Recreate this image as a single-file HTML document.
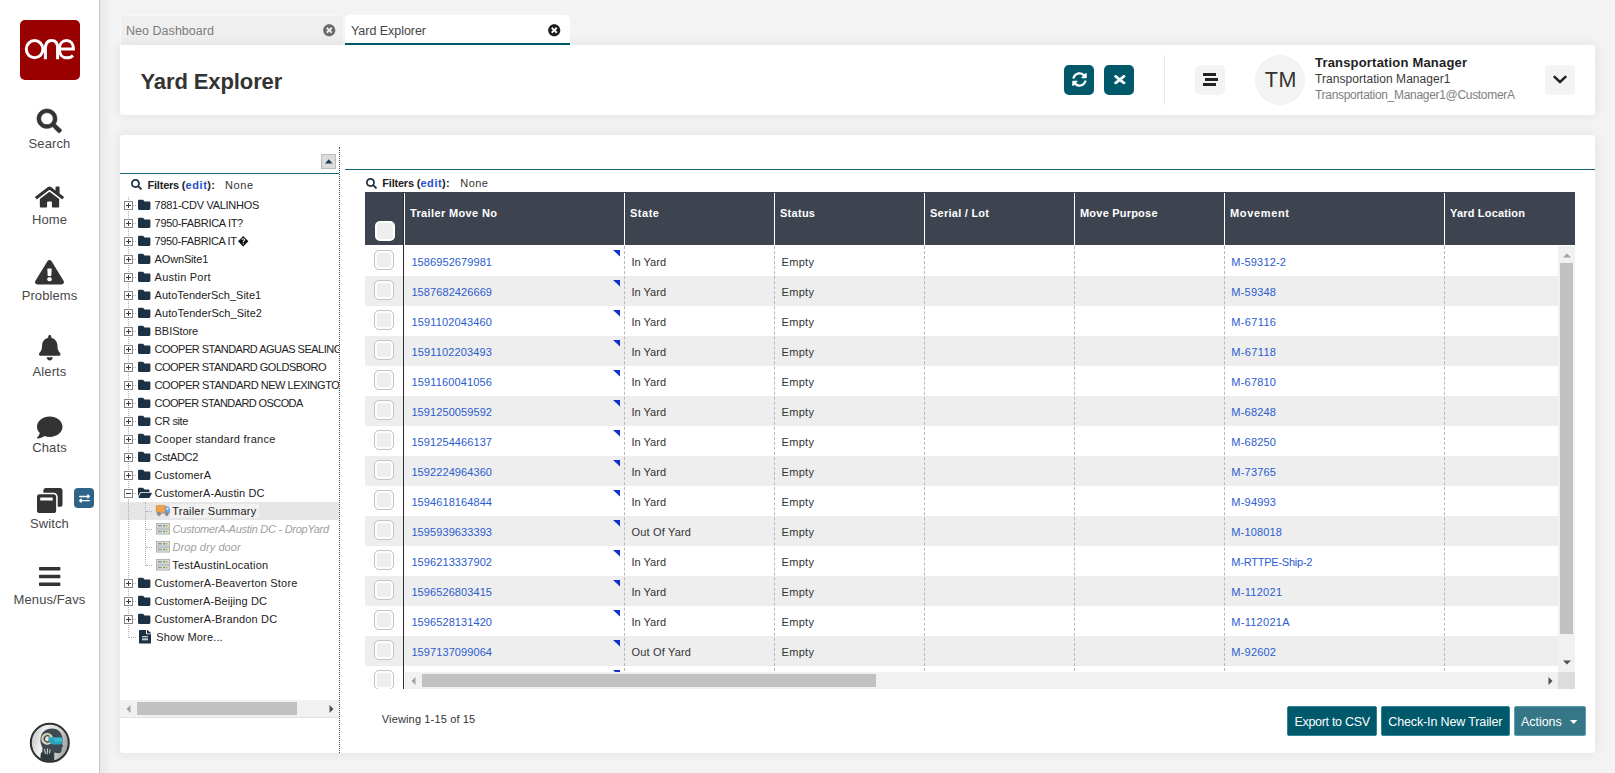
<!DOCTYPE html>
<html><head><meta charset="utf-8"><title>Yard Explorer</title>
<style>
html,body{margin:0;padding:0}
body{width:1615px;height:773px;overflow:hidden;position:relative;background:#f4f3f3;font-family:"Liberation Sans", sans-serif;}
svg{display:block;overflow:visible}
</style></head><body>
<div style="position:absolute;left:100px;top:0px;width:12px;height:773px;background:linear-gradient(to right,#eae8e8,#f4f3f3);"></div>
<div style="position:absolute;left:0px;top:0px;width:99px;height:773px;background:#fff;"></div>
<div style="position:absolute;left:99px;top:0px;width:1px;height:773px;background:#c6c6c6;"></div>
<div style="position:absolute;left:20px;top:20px;width:60px;height:60px;background:#990000;border-radius:5px;"></div>
<svg style="position:absolute;left:20px;top:20px" width="60" height="60" viewBox="20 20 60 60" fill="none" stroke="#fff" stroke-width="3" stroke-linecap="butt">
<ellipse cx="34.6" cy="49.2" rx="8.3" ry="8.6"/>
<path d="M45.4 59.3 V49 C45.4 42.5 48.5 40.6 51.6 40.6 C55 40.6 57.6 42.6 57.6 48 V59.3"/>
<path d="M59.6 49 H73.4 C73.4 43.5 70.5 40.6 66.6 40.6 C62.2 40.6 59.3 44 59.3 49.2 C59.3 54.6 62.4 57.8 66.8 57.8 C69.6 57.8 71.6 56.9 73 55.4"/>
</svg>
<svg style="position:absolute;left:37px;top:108.9px;" width="24.6" height="23.8" viewBox="0 0 512 512" preserveAspectRatio="none"><path stroke="#333" stroke-width="14" fill="#333" d="M505 442.7L405.3 343c-4.5-4.5-10.6-7-17-7H372c27.6-35.3 44-79.7 44-128C416 93.1 322.9 0 208 0S0 93.1 0 208s93.1 208 208 208c48.3 0 92.7-16.4 128-44v16.3c0 6.4 2.5 12.5 7 17l99.7 99.7c9.4 9.4 24.6 9.4 33.9 0l28.3-28.3c9.4-9.4 9.4-24.6.1-34zM208 336c-70.7 0-128-57.2-128-128 0-70.7 57.2-128 128-128 70.7 0 128 57.2 128 128 0 70.7-57.2 128-128 128z"/></svg>
<div style="position:absolute;left:0;top:134px;width:99px;text-align:center;font-size:13px;line-height:20px;color:#484848;letter-spacing:0.1px">Search</div>
<svg style="position:absolute;left:35.3px;top:184.6px;" width="29" height="24" viewBox="0 0 576 512" preserveAspectRatio="none"><path fill="#333" d="M280.37 148.26L96 300.11V464a16 16 0 0 0 16 16l112.06-.29a16 16 0 0 0 15.92-16V368a16 16 0 0 1 16-16h64a16 16 0 0 1 16 16v95.64a16 16 0 0 0 16 16.05L464 480a16 16 0 0 0 16-16V300L295.67 148.26a12.19 12.19 0 0 0-15.3 0zM571.6 251.47L488 182.56V44.05a12 12 0 0 0-12-12h-56a12 12 0 0 0-12 12v72.61L318.47 43a48 48 0 0 0-61 0L4.34 251.47a12 12 0 0 0-1.6 16.9l25.5 31A12 12 0 0 0 45.15 301l235.22-193.74a12.19 12.19 0 0 1 15.3 0L530.9 301a12 12 0 0 0 16.9-1.6l25.5-31a12 12 0 0 0-1.7-16.93z"/></svg>
<div style="position:absolute;left:0;top:210px;width:99px;text-align:center;font-size:13px;line-height:20px;color:#484848;letter-spacing:0.1px">Home</div>
<svg style="position:absolute;left:35.3px;top:260px;" width="29" height="24.5" viewBox="0 0 576 512" preserveAspectRatio="none"><path fill="#333" d="M569.517 440.013C587.975 472.007 564.806 512 527.94 512H48.054c-36.937 0-59.999-40.055-41.577-71.987L246.423 23.985c18.467-32.009 64.72-31.951 83.154 0l239.94 416.028zM288 354c-25.405 0-46 20.595-46 46s20.595 46 46 46 46-20.595 46-46-20.595-46-46-46zm-43.673-165.346l7.418 136c.347 6.364 5.609 11.346 11.982 11.346h48.546c6.373 0 11.635-4.982 11.982-11.346l7.418-136c.375-6.874-5.098-12.654-11.982-12.654h-63.383c-6.884 0-12.356 5.78-11.981 12.654z"/></svg>
<div style="position:absolute;left:0;top:286px;width:99px;text-align:center;font-size:13px;line-height:20px;color:#484848;letter-spacing:0.1px">Problems</div>
<svg style="position:absolute;left:39px;top:335.2px;" width="21.5" height="25.5" viewBox="0 0 448 512" preserveAspectRatio="none"><path fill="#333" d="M224 512c35.32 0 63.97-28.65 63.97-64H160.03c0 35.35 28.65 64 63.97 64zm215.39-149.71c-19.32-20.76-55.47-51.99-55.47-154.29 0-77.7-54.48-139.9-127.94-155.16V32c0-17.67-14.32-32-31.98-32s-31.98 14.33-31.98 32v20.84C118.56 68.1 64.08 130.3 64.08 208c0 102.3-36.15 133.53-55.47 154.29-6 6.45-8.66 14.16-8.61 21.71.11 16.4 12.98 32 32.1 32h383.8c19.12 0 32-15.6 32.1-32 .05-7.55-2.61-15.27-8.61-21.71z"/></svg>
<div style="position:absolute;left:0;top:362px;width:99px;text-align:center;font-size:13px;line-height:20px;color:#484848;letter-spacing:0.1px">Alerts</div>
<svg style="position:absolute;left:37px;top:415px;" width="25.5" height="25" viewBox="0 0 512 512" preserveAspectRatio="none"><path fill="#333" d="M256 32C114.6 32 0 125.1 0 240c0 49.6 21.4 95 57 130.7C44.5 421.1 2.7 466 2.2 466.5c-2.2 2.3-2.8 5.7-1.5 8.7S4.8 480 8 480c66.3 0 116-31.8 140.6-51.4 32.7 12.3 69 19.4 107.4 19.4 141.4 0 256-93.1 256-208S397.4 32 256 32z"/></svg>
<div style="position:absolute;left:0;top:438px;width:99px;text-align:center;font-size:13px;line-height:20px;color:#484848;letter-spacing:0.1px">Chats</div>
<svg style="position:absolute;left:37px;top:487.5px;" width="25.5" height="25" viewBox="0 0 512 512" preserveAspectRatio="none"><path fill="#333" d="M512 48v288c0 26.5-21.5 48-48 48h-48V176c0-44.1-35.9-80-80-80H128V48c0-26.5 21.5-48 48-48h288c26.5 0 48 21.5 48 48zM384 176v288c0 26.5-21.5 48-48 48H48c-26.5 0-48-21.5-48-48V176c0-26.5 21.5-48 48-48h288c26.5 0 48 21.5 48 48zm-68 28c0-6.6-5.4-12-12-12H76c-6.6 0-12 5.4-12 12v52h252v-52z"/></svg>
<div style="position:absolute;left:0;top:514px;width:99px;text-align:center;font-size:13px;line-height:20px;color:#484848;letter-spacing:0.1px">Switch</div>
<svg style="position:absolute;left:38.8px;top:564px;" width="21.4" height="25" viewBox="0 0 448 512" preserveAspectRatio="none"><path fill="#333" d="M16 132h416c8.837 0 16-7.163 16-16V76c0-8.837-7.163-16-16-16H16C7.163 60 0 67.163 0 76v40c0 8.837 7.163 16 16 16zm0 160h416c8.837 0 16-7.163 16-16v-40c0-8.837-7.163-16-16-16H16c-8.837 0-16 7.163-16 16v40c0 8.837 7.163 16 16 16zm0 160h416c8.837 0 16-7.163 16-16v-40c0-8.837-7.163-16-16-16H16c-8.837 0-16 7.163-16 16v40c0 8.837 7.163 16 16 16z"/></svg>
<div style="position:absolute;left:0;top:590px;width:99px;text-align:center;font-size:13px;line-height:20px;color:#484848;letter-spacing:0.1px">Menus/Favs</div>
<div style="position:absolute;left:74px;top:488px;width:20px;height:20px;background:#2f6388;border-radius:4px;"></div>
<svg style="position:absolute;left:78.5px;top:492.5px;" width="11" height="11" viewBox="0 0 512 512" preserveAspectRatio="none"><path fill="#fff" d="M0 168v-16c0-13.255 10.745-24 24-24h360V80c0-21.367 25.899-32.042 40.971-16.971l80 80c9.372 9.373 9.372 24.569 0 33.941l-80 80C409.956 271.982 384 261.456 384 240v-48H24c-13.255 0-24-10.745-24-24zm488 152H128v-48c0-21.314-25.862-32.08-40.971-16.971l-80 80c-9.372 9.373-9.372 24.569 0 33.941l80 80C102.057 463.997 128 453.437 128 432v-48h360c13.255 0 24-10.745 24-24v-16c0-13.255-10.745-24-24-24z"/></svg>
<svg style="position:absolute;left:20px;top:713px" width="60" height="60" viewBox="0 0 60 60">
<defs><linearGradient id="ag" x1="0" y1="0" x2="1" y2="0.25"><stop offset="0" stop-color="#b9b9b9"/><stop offset="0.38" stop-color="#f1f1f1"/><stop offset="0.7" stop-color="#dcdcdc"/><stop offset="1" stop-color="#a9a9a9"/></linearGradient>
<clipPath id="ac"><circle cx="29.8" cy="29.8" r="18.4"/></clipPath></defs>
<circle cx="29.8" cy="29.8" r="19" fill="url(#ag)" stroke="#2b3033" stroke-width="2"/>
<g clip-path="url(#ac)">
<path d="M22.6 35 C19.6 30 19.4 22 24 18.2 C28 14.8 35 14.6 39 18 C41.6 20.4 42.6 23.6 42.4 26.4 L42.3 31.6 L43.3 33.6 L41.9 34.6 L41.6 37.6 C41.4 39.8 40 40.6 37.6 40.2 L34.4 39.6 L34.2 48 L21 48 L22.2 38 Z" fill="#3d4b51"/>
<path d="M21 39.5 H32.6 L34.2 48 H20 Z" fill="#2e3a3f"/>
<path d="M24.6 36 L25.4 41 M27.6 35.6 L27.2 41.4 M30.2 36.4 L29.4 40.6" stroke="#dfe6e8" stroke-width="0.9"/>
<circle cx="27.2" cy="25.8" r="5.9" fill="#dfe5e7"/>
<circle cx="27.2" cy="25.8" r="4.3" fill="none" stroke="#c9a44a" stroke-width="0.8"/>
<path d="M29.4 23.6 A3 3 0 1 0 29.4 28" fill="none" stroke="#3d4b51" stroke-width="1.3"/>
<path d="M28.4 24.2 H40.6 C42.6 24.2 42.8 25.6 42.6 27.8 C42.4 30.4 41.6 31.5 39.6 31.5 H33 C30.6 31.5 28.8 29 28.4 26.6 Z" fill="#2aa5bb"/>
<path d="M33 25 H41.6 C42.2 26 42.2 27.4 41.8 28.6 H35 Z" fill="#48c2d6" opacity="0.7"/>
</g>
</svg>
<div style="position:absolute;left:120px;top:15px;width:224px;height:30px;background:#f0efef;border-radius:5px 5px 0 0;border:1px solid #f9f8f8;border-bottom:none;box-sizing:border-box;"></div>
<span style="position:absolute;left:126px;top:20.87px;line-height:20px;font-size:12.5px;color:#7c7c7c;font-weight:normal;font-style:normal;white-space:pre;letter-spacing:0.036px;">Neo Dashboard</span>
<svg style="position:absolute;left:322.5px;top:23.5px;" width="12.5" height="12.5" viewBox="0 0 512 512" preserveAspectRatio="none"><path fill="#6a6a6a" d="M256 8C119 8 8 119 8 256s111 248 248 248 248-111 248-248S393 8 256 8zm121.6 313.1c4.7 4.7 4.7 12.3 0 17L338 377.6c-4.7 4.7-12.3 4.7-17 0L256 312l-65.1 65.6c-4.7 4.7-12.3 4.7-17 0L134.4 338c-4.7-4.7-4.7-12.3 0-17l65.6-65-65.6-65.1c-4.7-4.7-4.7-12.3 0-17l39.6-39.6c4.7-4.7 12.3-4.7 17 0l65 65.7 65.1-65.6c4.7-4.7 12.3-4.7 17 0l39.6 39.6c4.7 4.7 4.7 12.3 0 17L312 256l65.6 65.1z"/></svg>
<div style="position:absolute;left:120px;top:45px;width:1475px;height:70px;background:#fff;border-radius:0 3px 3px 3px;box-shadow:0 0 12px rgba(40,20,20,0.085);"></div>
<div style="position:absolute;left:345px;top:15px;width:225px;height:30px;background:#fff;border-radius:5px 5px 0 0;"></div>
<div style="position:absolute;left:345px;top:43px;width:225px;height:2px;background:#00586b;"></div>
<span style="position:absolute;left:351px;top:20.87px;line-height:20px;font-size:12.5px;color:#444;font-weight:normal;font-style:normal;white-space:pre;letter-spacing:-0.042px;">Yard Explorer</span>
<svg style="position:absolute;left:547.7px;top:23.5px;" width="12.5" height="12.5" viewBox="0 0 512 512" preserveAspectRatio="none"><path fill="#1e1e1e" d="M256 8C119 8 8 119 8 256s111 248 248 248 248-111 248-248S393 8 256 8zm121.6 313.1c4.7 4.7 4.7 12.3 0 17L338 377.6c-4.7 4.7-12.3 4.7-17 0L256 312l-65.1 65.6c-4.7 4.7-12.3 4.7-17 0L134.4 338c-4.7-4.7-4.7-12.3 0-17l65.6-65-65.6-65.1c-4.7-4.7-4.7-12.3 0-17l39.6-39.6c4.7-4.7 12.3-4.7 17 0l65 65.7 65.1-65.6c4.7-4.7 12.3-4.7 17 0l39.6 39.6c4.7 4.7 4.7 12.3 0 17L312 256l65.6 65.1z"/></svg>
<span style="position:absolute;left:140.5px;top:71.73px;line-height:20px;font-size:22px;color:#333;font-weight:bold;font-style:normal;white-space:pre;letter-spacing:-0.107px;">Yard Explorer</span>
<div style="position:absolute;left:1064px;top:65px;width:30px;height:30px;background:#00586b;border-radius:5px;"></div>
<svg style="position:absolute;left:1072px;top:72px;" width="15" height="15" viewBox="0 0 512 512" preserveAspectRatio="none"><path fill="#fff" d="M370.72 133.28C339.458 104.008 298.888 87.962 255.848 88c-77.458.068-144.328 53.178-162.791 126.85-1.344 5.363-6.122 9.15-11.651 9.15H24.103c-7.498 0-13.194-6.807-11.807-14.176C33.933 94.924 134.813 8 256 8c66.448 0 126.791 26.136 171.315 68.685L463.03 40.97C478.149 25.851 504 36.559 504 57.941V192c0 13.255-10.745 24-24 24H345.941c-21.382 0-32.09-25.851-16.971-40.971l41.75-41.749zM32 296h134.059c21.382 0 32.09 25.851 16.971 40.971l-41.75 41.75c31.262 29.273 71.835 45.319 114.876 45.28 77.418-.07 144.315-53.144 162.787-126.849 1.344-5.363 6.122-9.15 11.651-9.15h57.304c7.498 0 13.194 6.807 11.807 14.176C478.067 417.076 377.187 504 256 504c-66.448 0-126.791-26.136-171.315-68.685L48.97 471.03C33.851 486.149 8 475.441 8 454.059V320c0-13.255 10.745-24 24-24z"/></svg>
<div style="position:absolute;left:1104px;top:65px;width:30px;height:30px;background:#00586b;border-radius:5px;"></div>
<svg style="position:absolute;left:1113.6px;top:73px;" width="11.6" height="13.4" viewBox="0 0 352 512" preserveAspectRatio="none"><path fill="#fff" d="M242.72 256l100.07-100.07c12.28-12.28 12.28-32.19 0-44.48l-22.24-22.24c-12.28-12.28-32.19-12.28-44.48 0L176 189.28 75.93 89.21c-12.28-12.28-32.19-12.28-44.48 0L9.21 111.45c-12.28 12.28-12.28 32.19 0 44.48L109.28 256 9.21 356.07c-12.28 12.28-12.28 32.19 0 44.48l22.24 22.24c12.28 12.28 32.2 12.28 44.48 0L176 322.72l100.07 100.07c12.28 12.28 32.2 12.28 44.48 0l22.24-22.24c12.28-12.28 12.28-32.19 0-44.48L242.72 256z"/></svg>
<div style="position:absolute;left:1164px;top:55px;width:1px;height:50px;background:#e8e8e8;"></div>
<div style="position:absolute;left:1195px;top:65px;width:30px;height:30px;background:#f3f3f3;border-radius:5px;"></div>
<div style="position:absolute;left:1203.2px;top:73.2px;width:12.8px;height:2.4px;background:#222;"></div>
<div style="position:absolute;left:1205.4px;top:78.2px;width:12.6px;height:2.4px;background:#222;"></div>
<div style="position:absolute;left:1203.2px;top:83.4px;width:12.8px;height:2.4px;background:#222;"></div>
<div style="position:absolute;left:1255px;top:55px;width:50px;height:50px;background:#f3f3f3;border-radius:50%;"></div>
<span style="position:absolute;left:1264.7px;top:70.49px;line-height:20px;font-size:21.5px;color:#333;font-weight:normal;font-style:normal;white-space:pre;letter-spacing:0.753px;">TM</span>
<span style="position:absolute;left:1315px;top:53.20px;line-height:20px;font-size:13px;color:#222;font-weight:bold;font-style:normal;white-space:pre;letter-spacing:0.187px;">Transportation Manager</span>
<span style="position:absolute;left:1315px;top:69.03px;line-height:20px;font-size:12px;color:#3a3a3a;font-weight:normal;font-style:normal;white-space:pre;letter-spacing:0.055px;">Transportation Manager1</span>
<span style="position:absolute;left:1315px;top:85.03px;line-height:20px;font-size:12px;color:#7e7e7e;font-weight:normal;font-style:normal;white-space:pre;letter-spacing:-0.308px;">Transportation_Manager1@CustomerA</span>
<div style="position:absolute;left:1545px;top:65px;width:30px;height:30px;background:#f3f3f3;border-radius:5px;"></div>
<svg style="position:absolute;left:1553px;top:72px;" width="14" height="15" viewBox="0 0 448 512" preserveAspectRatio="none"><path fill="#222" d="M207.029 381.476L12.686 187.132c-9.373-9.373-9.373-24.569 0-33.941l22.667-22.667c9.357-9.357 24.522-9.375 33.901-.04L224 284.505l154.745-154.021c9.379-9.335 24.544-9.317 33.901.04l22.667 22.667c9.373 9.373 9.373 24.569 0 33.941L240.971 381.476c-9.373 9.372-24.569 9.372-33.942 0z"/></svg>
<div style="position:absolute;left:120px;top:135px;width:1475px;height:618px;background:#fff;border-radius:3px;box-shadow:0 0 12px rgba(40,20,20,0.085);"></div>
<div style="position:absolute;left:120px;top:173px;width:219px;height:1px;background:#1a6478;"></div>
<div style="position:absolute;left:321px;top:154px;width:15px;height:15px;background:#dcdcdc;border:1px solid #bdbdbd;box-sizing:border-box;"></div>
<svg style="position:absolute;left:324.7px;top:159.2px" width="7.6" height="4.6" viewBox="0 0 6.4 3.6"><path d="M0 3.6 L3.2 0 L6.4 3.6Z" fill="#1f3d55"/></svg>
<div style="position:absolute;left:339px;top:147px;width:0;height:606px;border-left:1px dotted #444"></div>
<svg style="position:absolute;left:131px;top:179px;" width="11" height="11" viewBox="0 0 512 512" preserveAspectRatio="none"><path fill="#1c3144" d="M505 442.7L405.3 343c-4.5-4.5-10.6-7-17-7H372c27.6-35.3 44-79.7 44-128C416 93.1 322.9 0 208 0S0 93.1 0 208s93.1 208 208 208c48.3 0 92.7-16.4 128-44v16.3c0 6.4 2.5 12.5 7 17l99.7 99.7c9.4 9.4 24.6 9.4 33.9 0l28.3-28.3c9.4-9.4 9.4-24.6.1-34zM208 336c-70.7 0-128-57.2-128-128 0-70.7 57.2-128 128-128 70.7 0 128 57.2 128 128 0 70.7-57.2 128-128 128z"/></svg>
<span style="position:absolute;left:147.5px;top:175.36px;line-height:20px;font-size:11px;color:#222;font-weight:bold;font-style:normal;white-space:pre;letter-spacing:-0.217px;">Filters (</span>
<span style="position:absolute;left:185.6px;top:175.36px;line-height:20px;font-size:11px;color:#2452c8;font-weight:bold;font-style:normal;white-space:pre;letter-spacing:0.579px;">edit</span>
<span style="position:absolute;left:207.3px;top:175.36px;line-height:20px;font-size:11px;color:#222;font-weight:bold;font-style:normal;white-space:pre;">)</span>
<span style="position:absolute;left:211.2px;top:175.36px;line-height:20px;font-size:11px;color:#222;font-weight:bold;font-style:normal;white-space:pre;">:</span>
<span style="position:absolute;left:225px;top:175.36px;line-height:20px;font-size:11px;color:#333;font-weight:normal;font-style:normal;white-space:pre;letter-spacing:0.568px;">None</span>
<div style="position:absolute;left:120px;top:174px;width:219px;height:526px;overflow:hidden">
<div style="position:absolute;left:-120px;top:-174px">
<div style="position:absolute;left:120px;top:502px;width:219px;height:18px;background:#e6e6e6;"></div>
<div style="position:absolute;left:170px;top:503.5px;width:88.7px;height:14.5px;background:#f1f1f1;"></div>
<div style="position:absolute;left:128px;top:197px;width:0;height:441px;border-left:1px dotted #b0b0b0"></div>
<div style="position:absolute;left:145px;top:502px;width:0;height:64px;border-left:1px dotted #b0b0b0"></div>
<div style="position:absolute;left:131px;top:205px;width:5px;height:0px;background:none;border-top:1px dotted #b0b0b0;"></div>
<div style="position:absolute;left:124px;top:201px;width:9px;height:9px;background:#fff;border:1px solid #858585;box-sizing:border-box;"></div>
<div style="position:absolute;left:126px;top:205px;width:5px;height:1px;background:#3c3c3c;"></div>
<div style="position:absolute;left:128px;top:203px;width:1px;height:5px;background:#3c3c3c;"></div>
<svg style="position:absolute;left:138px;top:197.8px;" width="12.4" height="13.6" viewBox="0 0 512 512" preserveAspectRatio="none"><path fill="#1c3144" d="M464 128H272l-64-64H48C21.49 64 0 85.49 0 112v288c0 26.51 21.49 48 48 48h416c26.51 0 48-21.49 48-48V176c0-26.51-21.49-48-48-48z"/></svg>
<span style="position:absolute;left:154.6px;top:195.36px;line-height:20px;font-size:11px;color:#222;font-weight:normal;font-style:normal;white-space:pre;letter-spacing:-0.283px;">7881-CDV VALINHOS</span>
<div style="position:absolute;left:131px;top:223px;width:5px;height:0px;background:none;border-top:1px dotted #b0b0b0;"></div>
<div style="position:absolute;left:124px;top:219px;width:9px;height:9px;background:#fff;border:1px solid #858585;box-sizing:border-box;"></div>
<div style="position:absolute;left:126px;top:223px;width:5px;height:1px;background:#3c3c3c;"></div>
<div style="position:absolute;left:128px;top:221px;width:1px;height:5px;background:#3c3c3c;"></div>
<svg style="position:absolute;left:138px;top:215.8px;" width="12.4" height="13.6" viewBox="0 0 512 512" preserveAspectRatio="none"><path fill="#1c3144" d="M464 128H272l-64-64H48C21.49 64 0 85.49 0 112v288c0 26.51 21.49 48 48 48h416c26.51 0 48-21.49 48-48V176c0-26.51-21.49-48-48-48z"/></svg>
<span style="position:absolute;left:154.6px;top:213.36px;line-height:20px;font-size:11px;color:#222;font-weight:normal;font-style:normal;white-space:pre;letter-spacing:-0.330px;">7950-FABRICA IT?</span>
<svg style="position:absolute;left:238.3px;top:236.3px" width="10.4" height="10.4" viewBox="0 0 10 10"><path d="M5 0 L10 5 L5 10 L0 5Z" fill="#111"/><path d="M3.7 3.6 C3.7 2.2 6.4 2.2 6.4 3.7 C6.4 4.8 5 4.7 5 6" stroke="#fff" stroke-width="1" fill="none"/><rect x="4.5" y="6.8" width="1" height="1" fill="#fff"/></svg>
<div style="position:absolute;left:131px;top:241px;width:5px;height:0px;background:none;border-top:1px dotted #b0b0b0;"></div>
<div style="position:absolute;left:124px;top:237px;width:9px;height:9px;background:#fff;border:1px solid #858585;box-sizing:border-box;"></div>
<div style="position:absolute;left:126px;top:241px;width:5px;height:1px;background:#3c3c3c;"></div>
<div style="position:absolute;left:128px;top:239px;width:1px;height:5px;background:#3c3c3c;"></div>
<svg style="position:absolute;left:138px;top:233.8px;" width="12.4" height="13.6" viewBox="0 0 512 512" preserveAspectRatio="none"><path fill="#1c3144" d="M464 128H272l-64-64H48C21.49 64 0 85.49 0 112v288c0 26.51 21.49 48 48 48h416c26.51 0 48-21.49 48-48V176c0-26.51-21.49-48-48-48z"/></svg>
<span style="position:absolute;left:154.6px;top:231.36px;line-height:20px;font-size:11px;color:#222;font-weight:normal;font-style:normal;white-space:pre;letter-spacing:-0.360px;">7950-FABRICA IT</span>
<div style="position:absolute;left:131px;top:259px;width:5px;height:0px;background:none;border-top:1px dotted #b0b0b0;"></div>
<div style="position:absolute;left:124px;top:255px;width:9px;height:9px;background:#fff;border:1px solid #858585;box-sizing:border-box;"></div>
<div style="position:absolute;left:126px;top:259px;width:5px;height:1px;background:#3c3c3c;"></div>
<div style="position:absolute;left:128px;top:257px;width:1px;height:5px;background:#3c3c3c;"></div>
<svg style="position:absolute;left:138px;top:251.8px;" width="12.4" height="13.6" viewBox="0 0 512 512" preserveAspectRatio="none"><path fill="#1c3144" d="M464 128H272l-64-64H48C21.49 64 0 85.49 0 112v288c0 26.51 21.49 48 48 48h416c26.51 0 48-21.49 48-48V176c0-26.51-21.49-48-48-48z"/></svg>
<span style="position:absolute;left:154.6px;top:249.36px;line-height:20px;font-size:11px;color:#222;font-weight:normal;font-style:normal;white-space:pre;letter-spacing:-0.166px;">AOwnSite1</span>
<div style="position:absolute;left:131px;top:277px;width:5px;height:0px;background:none;border-top:1px dotted #b0b0b0;"></div>
<div style="position:absolute;left:124px;top:273px;width:9px;height:9px;background:#fff;border:1px solid #858585;box-sizing:border-box;"></div>
<div style="position:absolute;left:126px;top:277px;width:5px;height:1px;background:#3c3c3c;"></div>
<div style="position:absolute;left:128px;top:275px;width:1px;height:5px;background:#3c3c3c;"></div>
<svg style="position:absolute;left:138px;top:269.8px;" width="12.4" height="13.6" viewBox="0 0 512 512" preserveAspectRatio="none"><path fill="#1c3144" d="M464 128H272l-64-64H48C21.49 64 0 85.49 0 112v288c0 26.51 21.49 48 48 48h416c26.51 0 48-21.49 48-48V176c0-26.51-21.49-48-48-48z"/></svg>
<span style="position:absolute;left:154.6px;top:267.36px;line-height:20px;font-size:11px;color:#222;font-weight:normal;font-style:normal;white-space:pre;letter-spacing:0.219px;">Austin Port</span>
<div style="position:absolute;left:131px;top:295px;width:5px;height:0px;background:none;border-top:1px dotted #b0b0b0;"></div>
<div style="position:absolute;left:124px;top:291px;width:9px;height:9px;background:#fff;border:1px solid #858585;box-sizing:border-box;"></div>
<div style="position:absolute;left:126px;top:295px;width:5px;height:1px;background:#3c3c3c;"></div>
<div style="position:absolute;left:128px;top:293px;width:1px;height:5px;background:#3c3c3c;"></div>
<svg style="position:absolute;left:138px;top:287.8px;" width="12.4" height="13.6" viewBox="0 0 512 512" preserveAspectRatio="none"><path fill="#1c3144" d="M464 128H272l-64-64H48C21.49 64 0 85.49 0 112v288c0 26.51 21.49 48 48 48h416c26.51 0 48-21.49 48-48V176c0-26.51-21.49-48-48-48z"/></svg>
<span style="position:absolute;left:154.6px;top:285.36px;line-height:20px;font-size:11px;color:#222;font-weight:normal;font-style:normal;white-space:pre;letter-spacing:0.010px;">AutoTenderSch_Site1</span>
<div style="position:absolute;left:131px;top:313px;width:5px;height:0px;background:none;border-top:1px dotted #b0b0b0;"></div>
<div style="position:absolute;left:124px;top:309px;width:9px;height:9px;background:#fff;border:1px solid #858585;box-sizing:border-box;"></div>
<div style="position:absolute;left:126px;top:313px;width:5px;height:1px;background:#3c3c3c;"></div>
<div style="position:absolute;left:128px;top:311px;width:1px;height:5px;background:#3c3c3c;"></div>
<svg style="position:absolute;left:138px;top:305.8px;" width="12.4" height="13.6" viewBox="0 0 512 512" preserveAspectRatio="none"><path fill="#1c3144" d="M464 128H272l-64-64H48C21.49 64 0 85.49 0 112v288c0 26.51 21.49 48 48 48h416c26.51 0 48-21.49 48-48V176c0-26.51-21.49-48-48-48z"/></svg>
<span style="position:absolute;left:154.6px;top:303.36px;line-height:20px;font-size:11px;color:#222;font-weight:normal;font-style:normal;white-space:pre;letter-spacing:0.054px;">AutoTenderSch_Site2</span>
<div style="position:absolute;left:131px;top:331px;width:5px;height:0px;background:none;border-top:1px dotted #b0b0b0;"></div>
<div style="position:absolute;left:124px;top:327px;width:9px;height:9px;background:#fff;border:1px solid #858585;box-sizing:border-box;"></div>
<div style="position:absolute;left:126px;top:331px;width:5px;height:1px;background:#3c3c3c;"></div>
<div style="position:absolute;left:128px;top:329px;width:1px;height:5px;background:#3c3c3c;"></div>
<svg style="position:absolute;left:138px;top:323.8px;" width="12.4" height="13.6" viewBox="0 0 512 512" preserveAspectRatio="none"><path fill="#1c3144" d="M464 128H272l-64-64H48C21.49 64 0 85.49 0 112v288c0 26.51 21.49 48 48 48h416c26.51 0 48-21.49 48-48V176c0-26.51-21.49-48-48-48z"/></svg>
<span style="position:absolute;left:154.6px;top:321.36px;line-height:20px;font-size:11px;color:#222;font-weight:normal;font-style:normal;white-space:pre;letter-spacing:-0.062px;">BBIStore</span>
<div style="position:absolute;left:131px;top:349px;width:5px;height:0px;background:none;border-top:1px dotted #b0b0b0;"></div>
<div style="position:absolute;left:124px;top:345px;width:9px;height:9px;background:#fff;border:1px solid #858585;box-sizing:border-box;"></div>
<div style="position:absolute;left:126px;top:349px;width:5px;height:1px;background:#3c3c3c;"></div>
<div style="position:absolute;left:128px;top:347px;width:1px;height:5px;background:#3c3c3c;"></div>
<svg style="position:absolute;left:138px;top:341.8px;" width="12.4" height="13.6" viewBox="0 0 512 512" preserveAspectRatio="none"><path fill="#1c3144" d="M464 128H272l-64-64H48C21.49 64 0 85.49 0 112v288c0 26.51 21.49 48 48 48h416c26.51 0 48-21.49 48-48V176c0-26.51-21.49-48-48-48z"/></svg>
<span style="position:absolute;left:154.6px;top:339.36px;line-height:20px;font-size:11px;color:#222;font-weight:normal;font-style:normal;white-space:pre;letter-spacing:-0.519px;">COOPER STANDARD AGUAS SEALING</span>
<div style="position:absolute;left:131px;top:367px;width:5px;height:0px;background:none;border-top:1px dotted #b0b0b0;"></div>
<div style="position:absolute;left:124px;top:363px;width:9px;height:9px;background:#fff;border:1px solid #858585;box-sizing:border-box;"></div>
<div style="position:absolute;left:126px;top:367px;width:5px;height:1px;background:#3c3c3c;"></div>
<div style="position:absolute;left:128px;top:365px;width:1px;height:5px;background:#3c3c3c;"></div>
<svg style="position:absolute;left:138px;top:359.8px;" width="12.4" height="13.6" viewBox="0 0 512 512" preserveAspectRatio="none"><path fill="#1c3144" d="M464 128H272l-64-64H48C21.49 64 0 85.49 0 112v288c0 26.51 21.49 48 48 48h416c26.51 0 48-21.49 48-48V176c0-26.51-21.49-48-48-48z"/></svg>
<span style="position:absolute;left:154.6px;top:357.36px;line-height:20px;font-size:11px;color:#222;font-weight:normal;font-style:normal;white-space:pre;letter-spacing:-0.516px;">COOPER STANDARD GOLDSBORO</span>
<div style="position:absolute;left:131px;top:385px;width:5px;height:0px;background:none;border-top:1px dotted #b0b0b0;"></div>
<div style="position:absolute;left:124px;top:381px;width:9px;height:9px;background:#fff;border:1px solid #858585;box-sizing:border-box;"></div>
<div style="position:absolute;left:126px;top:385px;width:5px;height:1px;background:#3c3c3c;"></div>
<div style="position:absolute;left:128px;top:383px;width:1px;height:5px;background:#3c3c3c;"></div>
<svg style="position:absolute;left:138px;top:377.8px;" width="12.4" height="13.6" viewBox="0 0 512 512" preserveAspectRatio="none"><path fill="#1c3144" d="M464 128H272l-64-64H48C21.49 64 0 85.49 0 112v288c0 26.51 21.49 48 48 48h416c26.51 0 48-21.49 48-48V176c0-26.51-21.49-48-48-48z"/></svg>
<span style="position:absolute;left:154.6px;top:375.36px;line-height:20px;font-size:11px;color:#222;font-weight:normal;font-style:normal;white-space:pre;letter-spacing:-0.459px;">COOPER STANDARD NEW LEXINGTON</span>
<div style="position:absolute;left:131px;top:403px;width:5px;height:0px;background:none;border-top:1px dotted #b0b0b0;"></div>
<div style="position:absolute;left:124px;top:399px;width:9px;height:9px;background:#fff;border:1px solid #858585;box-sizing:border-box;"></div>
<div style="position:absolute;left:126px;top:403px;width:5px;height:1px;background:#3c3c3c;"></div>
<div style="position:absolute;left:128px;top:401px;width:1px;height:5px;background:#3c3c3c;"></div>
<svg style="position:absolute;left:138px;top:395.8px;" width="12.4" height="13.6" viewBox="0 0 512 512" preserveAspectRatio="none"><path fill="#1c3144" d="M464 128H272l-64-64H48C21.49 64 0 85.49 0 112v288c0 26.51 21.49 48 48 48h416c26.51 0 48-21.49 48-48V176c0-26.51-21.49-48-48-48z"/></svg>
<span style="position:absolute;left:154.6px;top:393.36px;line-height:20px;font-size:11px;color:#222;font-weight:normal;font-style:normal;white-space:pre;letter-spacing:-0.593px;">COOPER STANDARD OSCODA</span>
<div style="position:absolute;left:131px;top:421px;width:5px;height:0px;background:none;border-top:1px dotted #b0b0b0;"></div>
<div style="position:absolute;left:124px;top:417px;width:9px;height:9px;background:#fff;border:1px solid #858585;box-sizing:border-box;"></div>
<div style="position:absolute;left:126px;top:421px;width:5px;height:1px;background:#3c3c3c;"></div>
<div style="position:absolute;left:128px;top:419px;width:1px;height:5px;background:#3c3c3c;"></div>
<svg style="position:absolute;left:138px;top:413.8px;" width="12.4" height="13.6" viewBox="0 0 512 512" preserveAspectRatio="none"><path fill="#1c3144" d="M464 128H272l-64-64H48C21.49 64 0 85.49 0 112v288c0 26.51 21.49 48 48 48h416c26.51 0 48-21.49 48-48V176c0-26.51-21.49-48-48-48z"/></svg>
<span style="position:absolute;left:154.6px;top:411.36px;line-height:20px;font-size:11px;color:#222;font-weight:normal;font-style:normal;white-space:pre;letter-spacing:-0.377px;">CR site</span>
<div style="position:absolute;left:131px;top:439px;width:5px;height:0px;background:none;border-top:1px dotted #b0b0b0;"></div>
<div style="position:absolute;left:124px;top:435px;width:9px;height:9px;background:#fff;border:1px solid #858585;box-sizing:border-box;"></div>
<div style="position:absolute;left:126px;top:439px;width:5px;height:1px;background:#3c3c3c;"></div>
<div style="position:absolute;left:128px;top:437px;width:1px;height:5px;background:#3c3c3c;"></div>
<svg style="position:absolute;left:138px;top:431.8px;" width="12.4" height="13.6" viewBox="0 0 512 512" preserveAspectRatio="none"><path fill="#1c3144" d="M464 128H272l-64-64H48C21.49 64 0 85.49 0 112v288c0 26.51 21.49 48 48 48h416c26.51 0 48-21.49 48-48V176c0-26.51-21.49-48-48-48z"/></svg>
<span style="position:absolute;left:154.6px;top:429.36px;line-height:20px;font-size:11px;color:#222;font-weight:normal;font-style:normal;white-space:pre;letter-spacing:0.244px;">Cooper standard france</span>
<div style="position:absolute;left:131px;top:457px;width:5px;height:0px;background:none;border-top:1px dotted #b0b0b0;"></div>
<div style="position:absolute;left:124px;top:453px;width:9px;height:9px;background:#fff;border:1px solid #858585;box-sizing:border-box;"></div>
<div style="position:absolute;left:126px;top:457px;width:5px;height:1px;background:#3c3c3c;"></div>
<div style="position:absolute;left:128px;top:455px;width:1px;height:5px;background:#3c3c3c;"></div>
<svg style="position:absolute;left:138px;top:449.8px;" width="12.4" height="13.6" viewBox="0 0 512 512" preserveAspectRatio="none"><path fill="#1c3144" d="M464 128H272l-64-64H48C21.49 64 0 85.49 0 112v288c0 26.51 21.49 48 48 48h416c26.51 0 48-21.49 48-48V176c0-26.51-21.49-48-48-48z"/></svg>
<span style="position:absolute;left:154.6px;top:447.36px;line-height:20px;font-size:11px;color:#222;font-weight:normal;font-style:normal;white-space:pre;letter-spacing:-0.357px;">CstADC2</span>
<div style="position:absolute;left:131px;top:475px;width:5px;height:0px;background:none;border-top:1px dotted #b0b0b0;"></div>
<div style="position:absolute;left:124px;top:471px;width:9px;height:9px;background:#fff;border:1px solid #858585;box-sizing:border-box;"></div>
<div style="position:absolute;left:126px;top:475px;width:5px;height:1px;background:#3c3c3c;"></div>
<div style="position:absolute;left:128px;top:473px;width:1px;height:5px;background:#3c3c3c;"></div>
<svg style="position:absolute;left:138px;top:467.8px;" width="12.4" height="13.6" viewBox="0 0 512 512" preserveAspectRatio="none"><path fill="#1c3144" d="M464 128H272l-64-64H48C21.49 64 0 85.49 0 112v288c0 26.51 21.49 48 48 48h416c26.51 0 48-21.49 48-48V176c0-26.51-21.49-48-48-48z"/></svg>
<span style="position:absolute;left:154.6px;top:465.36px;line-height:20px;font-size:11px;color:#222;font-weight:normal;font-style:normal;white-space:pre;letter-spacing:0.171px;">CustomerA</span>
<div style="position:absolute;left:131px;top:493px;width:5px;height:0px;background:none;border-top:1px dotted #b0b0b0;"></div>
<div style="position:absolute;left:124px;top:489px;width:9px;height:9px;background:#fff;border:1px solid #858585;box-sizing:border-box;"></div>
<div style="position:absolute;left:126px;top:493px;width:5px;height:1px;background:#3c3c3c;"></div>
<svg style="position:absolute;left:138px;top:485.8px;" width="13.8" height="13.6" viewBox="0 0 576 512" preserveAspectRatio="none"><path fill="#1c3144" d="M572.694 292.093L500.27 416.248A63.997 63.997 0 0 1 444.989 448H45.025c-18.523 0-30.064-20.093-20.731-36.093l72.424-124.155A64 64 0 0 1 152 256h399.964c18.523 0 30.064 20.093 20.73 36.093zM152 224h328v-48c0-26.51-21.49-48-48-48H272l-64-64H48C21.49 64 0 85.49 0 112v278.046l69.077-118.418C86.214 242.25 117.989 224 152 224z"/></svg>
<span style="position:absolute;left:154.6px;top:483.36px;line-height:20px;font-size:11px;color:#222;font-weight:normal;font-style:normal;white-space:pre;letter-spacing:0.089px;">CustomerA-Austin DC</span>
<div style="position:absolute;left:146px;top:511px;width:6px;height:0px;background:none;border-top:1px dotted #b0b0b0;"></div>
<svg style="position:absolute;left:155.7px;top:505.3px" width="14" height="11.2" viewBox="0 0 15 12">
<rect x="0.3" y="0.5" width="9.6" height="7.6" rx="0.8" fill="#f3a04a" stroke="#d07e28" stroke-width="0.6"/>
<path d="M10.2 2 H13 L14.6 4.6 V8.1 H10.2Z" fill="#6aa9e6" stroke="#3f7fc0" stroke-width="0.5"/><rect x="11" y="3" width="2.2" height="2" fill="#d8ebfb"/>
<rect x="0.3" y="8" width="14.3" height="1.2" fill="#9a9a9a"/>
<circle cx="3.2" cy="9.8" r="1.7" fill="#666"/><circle cx="3.2" cy="9.8" r="0.7" fill="#ddd"/><circle cx="11.6" cy="9.8" r="1.7" fill="#666"/><circle cx="11.6" cy="9.8" r="0.7" fill="#ddd"/></svg>
<span style="position:absolute;left:172.3px;top:501.36px;line-height:20px;font-size:11px;color:#222;font-weight:normal;font-style:normal;white-space:pre;letter-spacing:0.215px;">Trailer Summary</span>
<div style="position:absolute;left:146px;top:529px;width:6px;height:0px;background:none;border-top:1px dotted #b0b0b0;"></div>
<svg style="position:absolute;left:155.7px;top:523.3px" width="14" height="11.6" viewBox="0 0 14.5 12">
<rect x="0.3" y="0.3" width="13.9" height="5" fill="#d9dde0" stroke="#8d959b" stroke-width="0.6"/><rect x="0.3" y="6.3" width="13.9" height="5.2" fill="#d9dde0" stroke="#8d959b" stroke-width="0.6"/>
<rect x="2" y="2" width="4" height="1.6" fill="#8f979d"/><rect x="2" y="8" width="4" height="1.6" fill="#8f979d"/>
<rect x="7.5" y="2" width="1.8" height="1.6" fill="#4aa84a"/><rect x="10" y="2" width="1.8" height="1.6" fill="#e0a030"/>
<rect x="7.5" y="8" width="1.8" height="1.6" fill="#4aa84a"/><rect x="10" y="8" width="1.8" height="1.6" fill="#e0a030"/></svg>
<span style="position:absolute;left:172.6px;top:519.36px;line-height:20px;font-size:11px;color:#a0a0a0;font-weight:normal;font-style:italic;white-space:pre;letter-spacing:-0.267px;">CustomerA-Austin DC - DropYard</span>
<div style="position:absolute;left:146px;top:547px;width:6px;height:0px;background:none;border-top:1px dotted #b0b0b0;"></div>
<svg style="position:absolute;left:155.7px;top:541.3px" width="14" height="11.6" viewBox="0 0 14.5 12">
<rect x="0.3" y="0.3" width="13.9" height="5" fill="#d9dde0" stroke="#8d959b" stroke-width="0.6"/><rect x="0.3" y="6.3" width="13.9" height="5.2" fill="#d9dde0" stroke="#8d959b" stroke-width="0.6"/>
<rect x="2" y="2" width="4" height="1.6" fill="#8f979d"/><rect x="2" y="8" width="4" height="1.6" fill="#8f979d"/>
<rect x="7.5" y="2" width="1.8" height="1.6" fill="#4aa84a"/><rect x="10" y="2" width="1.8" height="1.6" fill="#e0a030"/>
<rect x="7.5" y="8" width="1.8" height="1.6" fill="#4aa84a"/><rect x="10" y="8" width="1.8" height="1.6" fill="#e0a030"/></svg>
<span style="position:absolute;left:172.6px;top:537.36px;line-height:20px;font-size:11px;color:#a0a0a0;font-weight:normal;font-style:italic;white-space:pre;letter-spacing:0.061px;">Drop dry door</span>
<div style="position:absolute;left:146px;top:565px;width:6px;height:0px;background:none;border-top:1px dotted #b0b0b0;"></div>
<svg style="position:absolute;left:155.7px;top:559.3px" width="14" height="11.6" viewBox="0 0 14.5 12">
<rect x="0.3" y="0.3" width="13.9" height="5" fill="#d9dde0" stroke="#8d959b" stroke-width="0.6"/><rect x="0.3" y="6.3" width="13.9" height="5.2" fill="#d9dde0" stroke="#8d959b" stroke-width="0.6"/>
<rect x="2" y="2" width="4" height="1.6" fill="#8f979d"/><rect x="2" y="8" width="4" height="1.6" fill="#8f979d"/>
<rect x="7.5" y="2" width="1.8" height="1.6" fill="#4aa84a"/><rect x="10" y="2" width="1.8" height="1.6" fill="#e0a030"/>
<rect x="7.5" y="8" width="1.8" height="1.6" fill="#4aa84a"/><rect x="10" y="8" width="1.8" height="1.6" fill="#e0a030"/></svg>
<span style="position:absolute;left:172.3px;top:555.36px;line-height:20px;font-size:11px;color:#222;font-weight:normal;font-style:normal;white-space:pre;letter-spacing:0.209px;">TestAustinLocation</span>
<div style="position:absolute;left:131px;top:583px;width:5px;height:0px;background:none;border-top:1px dotted #b0b0b0;"></div>
<div style="position:absolute;left:124px;top:579px;width:9px;height:9px;background:#fff;border:1px solid #858585;box-sizing:border-box;"></div>
<div style="position:absolute;left:126px;top:583px;width:5px;height:1px;background:#3c3c3c;"></div>
<div style="position:absolute;left:128px;top:581px;width:1px;height:5px;background:#3c3c3c;"></div>
<svg style="position:absolute;left:138px;top:575.8px;" width="12.4" height="13.6" viewBox="0 0 512 512" preserveAspectRatio="none"><path fill="#1c3144" d="M464 128H272l-64-64H48C21.49 64 0 85.49 0 112v288c0 26.51 21.49 48 48 48h416c26.51 0 48-21.49 48-48V176c0-26.51-21.49-48-48-48z"/></svg>
<span style="position:absolute;left:154.6px;top:573.36px;line-height:20px;font-size:11px;color:#222;font-weight:normal;font-style:normal;white-space:pre;letter-spacing:0.193px;">CustomerA-Beaverton Store</span>
<div style="position:absolute;left:131px;top:601px;width:5px;height:0px;background:none;border-top:1px dotted #b0b0b0;"></div>
<div style="position:absolute;left:124px;top:597px;width:9px;height:9px;background:#fff;border:1px solid #858585;box-sizing:border-box;"></div>
<div style="position:absolute;left:126px;top:601px;width:5px;height:1px;background:#3c3c3c;"></div>
<div style="position:absolute;left:128px;top:599px;width:1px;height:5px;background:#3c3c3c;"></div>
<svg style="position:absolute;left:138px;top:593.8px;" width="12.4" height="13.6" viewBox="0 0 512 512" preserveAspectRatio="none"><path fill="#1c3144" d="M464 128H272l-64-64H48C21.49 64 0 85.49 0 112v288c0 26.51 21.49 48 48 48h416c26.51 0 48-21.49 48-48V176c0-26.51-21.49-48-48-48z"/></svg>
<span style="position:absolute;left:154.6px;top:591.36px;line-height:20px;font-size:11px;color:#222;font-weight:normal;font-style:normal;white-space:pre;letter-spacing:0.087px;">CustomerA-Beijing DC</span>
<div style="position:absolute;left:131px;top:619px;width:5px;height:0px;background:none;border-top:1px dotted #b0b0b0;"></div>
<div style="position:absolute;left:124px;top:615px;width:9px;height:9px;background:#fff;border:1px solid #858585;box-sizing:border-box;"></div>
<div style="position:absolute;left:126px;top:619px;width:5px;height:1px;background:#3c3c3c;"></div>
<div style="position:absolute;left:128px;top:617px;width:1px;height:5px;background:#3c3c3c;"></div>
<svg style="position:absolute;left:138px;top:611.8px;" width="12.4" height="13.6" viewBox="0 0 512 512" preserveAspectRatio="none"><path fill="#1c3144" d="M464 128H272l-64-64H48C21.49 64 0 85.49 0 112v288c0 26.51 21.49 48 48 48h416c26.51 0 48-21.49 48-48V176c0-26.51-21.49-48-48-48z"/></svg>
<span style="position:absolute;left:154.6px;top:609.36px;line-height:20px;font-size:11px;color:#222;font-weight:normal;font-style:normal;white-space:pre;letter-spacing:0.178px;">CustomerA-Brandon DC</span>
<div style="position:absolute;left:129px;top:637px;width:7px;height:0px;background:none;border-top:1px dotted #b0b0b0;"></div>
<svg style="position:absolute;left:139px;top:630.2px;" width="12" height="13.6" viewBox="0 0 384 512" preserveAspectRatio="none"><path fill="#1c3144" d="M224 136V0H24C10.7 0 0 10.7 0 24v464c0 13.3 10.7 24 24 24h336c13.3 0 24-10.7 24-24V160H248c-13.2 0-24-10.8-24-24zm64 236c0 6.6-5.4 12-12 12H108c-6.6 0-12-5.4-12-12v-8c0-6.6 5.4-12 12-12h168c6.6 0 12 5.4 12 12v8zm0-64c0 6.6-5.4 12-12 12H108c-6.6 0-12-5.4-12-12v-8c0-6.6 5.4-12 12-12h168c6.6 0 12 5.4 12 12v8zm0-72v8c0 6.6-5.4 12-12 12H108c-6.6 0-12-5.4-12-12v-8c0-6.6 5.4-12 12-12h168c6.6 0 12 5.4 12 12zm96-114.1v6.1H256V0h6.1c6.4 0 12.5 2.5 17 7l97.9 98c4.5 4.5 7 10.6 7 16.9z"/></svg>
<span style="position:absolute;left:156.2px;top:627.36px;line-height:20px;font-size:11px;color:#222;font-weight:normal;font-style:normal;white-space:pre;letter-spacing:0.153px;">Show More...</span>
</div></div>
<div style="position:absolute;left:120px;top:700px;width:219px;height:17px;background:#f1f1f1;"></div>
<div style="position:absolute;left:137px;top:702px;width:160px;height:13px;background:#c1c1c1;"></div>
<svg style="position:absolute;left:126px;top:704.5px" width="5" height="8" viewBox="0 0 5 8"><path d="M4.5 0 L0.5 4 L4.5 8Z" fill="#a3a3a3"/></svg>
<svg style="position:absolute;left:329px;top:704.5px" width="5" height="8" viewBox="0 0 5 8"><path d="M0.5 0 L4.5 4 L0.5 8Z" fill="#505050"/></svg>
<div style="position:absolute;left:120px;top:717px;width:219px;height:1px;background:#e2e2e2;"></div>
<div style="position:absolute;left:345px;top:169px;width:1250px;height:1px;background:#1a6478;"></div>
<svg style="position:absolute;left:366px;top:177.5px;" width="11" height="11" viewBox="0 0 512 512" preserveAspectRatio="none"><path fill="#1c3144" d="M505 442.7L405.3 343c-4.5-4.5-10.6-7-17-7H372c27.6-35.3 44-79.7 44-128C416 93.1 322.9 0 208 0S0 93.1 0 208s93.1 208 208 208c48.3 0 92.7-16.4 128-44v16.3c0 6.4 2.5 12.5 7 17l99.7 99.7c9.4 9.4 24.6 9.4 33.9 0l28.3-28.3c9.4-9.4 9.4-24.6.1-34zM208 336c-70.7 0-128-57.2-128-128 0-70.7 57.2-128 128-128 70.7 0 128 57.2 128 128 0 70.7-57.2 128-128 128z"/></svg>
<span style="position:absolute;left:382.3px;top:173.36px;line-height:20px;font-size:11px;color:#222;font-weight:bold;font-style:normal;white-space:pre;letter-spacing:-0.217px;">Filters (</span>
<span style="position:absolute;left:420.4px;top:173.36px;line-height:20px;font-size:11px;color:#2452c8;font-weight:bold;font-style:normal;white-space:pre;letter-spacing:0.579px;">edit</span>
<span style="position:absolute;left:442.1px;top:173.36px;line-height:20px;font-size:11px;color:#222;font-weight:bold;font-style:normal;white-space:pre;">)</span>
<span style="position:absolute;left:446px;top:173.36px;line-height:20px;font-size:11px;color:#222;font-weight:bold;font-style:normal;white-space:pre;">:</span>
<span style="position:absolute;left:460.3px;top:173.36px;line-height:20px;font-size:11px;color:#333;font-weight:normal;font-style:normal;white-space:pre;letter-spacing:0.434px;">None</span>
<div style="position:absolute;left:365px;top:192px;width:1210px;height:53px;background:#3d444f;"></div>
<div style="position:absolute;left:624px;top:193px;width:1px;height:52px;background:#fff;"></div>
<div style="position:absolute;left:774px;top:193px;width:1px;height:52px;background:#fff;"></div>
<div style="position:absolute;left:924px;top:193px;width:1px;height:52px;background:#fff;"></div>
<div style="position:absolute;left:1074px;top:193px;width:1px;height:52px;background:#fff;"></div>
<div style="position:absolute;left:1224px;top:193px;width:1px;height:52px;background:#fff;"></div>
<div style="position:absolute;left:1444px;top:193px;width:1px;height:52px;background:#fff;"></div>
<span style="position:absolute;left:410px;top:203.36px;line-height:20px;font-size:11px;color:#fff;font-weight:bold;font-style:normal;white-space:pre;letter-spacing:0.363px;">Trailer Move No</span>
<span style="position:absolute;left:630px;top:203.36px;line-height:20px;font-size:11px;color:#fff;font-weight:bold;font-style:normal;white-space:pre;letter-spacing:0.523px;">State</span>
<span style="position:absolute;left:780px;top:203.36px;line-height:20px;font-size:11px;color:#fff;font-weight:bold;font-style:normal;white-space:pre;letter-spacing:0.275px;">Status</span>
<span style="position:absolute;left:930px;top:203.36px;line-height:20px;font-size:11px;color:#fff;font-weight:bold;font-style:normal;white-space:pre;letter-spacing:0.250px;">Serial / Lot</span>
<span style="position:absolute;left:1080px;top:203.36px;line-height:20px;font-size:11px;color:#fff;font-weight:bold;font-style:normal;white-space:pre;letter-spacing:0.210px;">Move Purpose</span>
<span style="position:absolute;left:1230px;top:203.36px;line-height:20px;font-size:11px;color:#fff;font-weight:bold;font-style:normal;white-space:pre;letter-spacing:0.656px;">Movement</span>
<span style="position:absolute;left:1450px;top:203.36px;line-height:20px;font-size:11px;color:#fff;font-weight:bold;font-style:normal;white-space:pre;letter-spacing:0.188px;">Yard Location</span>
<div style="position:absolute;left:375px;top:221px;width:20px;height:20px;background:#eee;border:2px solid #fff;border-radius:5px;box-sizing:border-box;"></div>
<div style="position:absolute;left:365px;top:246px;width:1193px;height:443px;overflow:hidden"><div style="position:absolute;left:-365px;top:-246px">
<div style="position:absolute;left:374px;top:250px;width:20px;height:20px;background:#eee;border:1px solid #c4c4c4;border-radius:5px;box-sizing:border-box;box-shadow:inset 0 0 0 2px #fff;"></div>
<div style="position:absolute;left:365px;top:276px;width:1193px;height:30px;background:#eeeeee;"></div>
<div style="position:absolute;left:374px;top:280px;width:20px;height:20px;background:#eee;border:1px solid #c4c4c4;border-radius:5px;box-sizing:border-box;box-shadow:inset 0 0 0 2px #fff;"></div>
<div style="position:absolute;left:374px;top:310px;width:20px;height:20px;background:#eee;border:1px solid #c4c4c4;border-radius:5px;box-sizing:border-box;box-shadow:inset 0 0 0 2px #fff;"></div>
<div style="position:absolute;left:365px;top:336px;width:1193px;height:30px;background:#eeeeee;"></div>
<div style="position:absolute;left:374px;top:340px;width:20px;height:20px;background:#eee;border:1px solid #c4c4c4;border-radius:5px;box-sizing:border-box;box-shadow:inset 0 0 0 2px #fff;"></div>
<div style="position:absolute;left:374px;top:370px;width:20px;height:20px;background:#eee;border:1px solid #c4c4c4;border-radius:5px;box-sizing:border-box;box-shadow:inset 0 0 0 2px #fff;"></div>
<div style="position:absolute;left:365px;top:396px;width:1193px;height:30px;background:#eeeeee;"></div>
<div style="position:absolute;left:374px;top:400px;width:20px;height:20px;background:#eee;border:1px solid #c4c4c4;border-radius:5px;box-sizing:border-box;box-shadow:inset 0 0 0 2px #fff;"></div>
<div style="position:absolute;left:374px;top:430px;width:20px;height:20px;background:#eee;border:1px solid #c4c4c4;border-radius:5px;box-sizing:border-box;box-shadow:inset 0 0 0 2px #fff;"></div>
<div style="position:absolute;left:365px;top:456px;width:1193px;height:30px;background:#eeeeee;"></div>
<div style="position:absolute;left:374px;top:460px;width:20px;height:20px;background:#eee;border:1px solid #c4c4c4;border-radius:5px;box-sizing:border-box;box-shadow:inset 0 0 0 2px #fff;"></div>
<div style="position:absolute;left:374px;top:490px;width:20px;height:20px;background:#eee;border:1px solid #c4c4c4;border-radius:5px;box-sizing:border-box;box-shadow:inset 0 0 0 2px #fff;"></div>
<div style="position:absolute;left:365px;top:516px;width:1193px;height:30px;background:#eeeeee;"></div>
<div style="position:absolute;left:374px;top:520px;width:20px;height:20px;background:#eee;border:1px solid #c4c4c4;border-radius:5px;box-sizing:border-box;box-shadow:inset 0 0 0 2px #fff;"></div>
<div style="position:absolute;left:374px;top:550px;width:20px;height:20px;background:#eee;border:1px solid #c4c4c4;border-radius:5px;box-sizing:border-box;box-shadow:inset 0 0 0 2px #fff;"></div>
<div style="position:absolute;left:365px;top:576px;width:1193px;height:30px;background:#eeeeee;"></div>
<div style="position:absolute;left:374px;top:580px;width:20px;height:20px;background:#eee;border:1px solid #c4c4c4;border-radius:5px;box-sizing:border-box;box-shadow:inset 0 0 0 2px #fff;"></div>
<div style="position:absolute;left:374px;top:610px;width:20px;height:20px;background:#eee;border:1px solid #c4c4c4;border-radius:5px;box-sizing:border-box;box-shadow:inset 0 0 0 2px #fff;"></div>
<div style="position:absolute;left:365px;top:636px;width:1193px;height:30px;background:#eeeeee;"></div>
<div style="position:absolute;left:374px;top:640px;width:20px;height:20px;background:#eee;border:1px solid #c4c4c4;border-radius:5px;box-sizing:border-box;box-shadow:inset 0 0 0 2px #fff;"></div>
<div style="position:absolute;left:374px;top:670px;width:20px;height:20px;background:#eee;border:1px solid #c4c4c4;border-radius:5px;box-sizing:border-box;box-shadow:inset 0 0 0 2px #fff;"></div>
</div></div>
<div style="position:absolute;left:405px;top:246px;width:1153px;height:426px;overflow:hidden"><div style="position:absolute;left:-405px;top:-246px">
<div style="position:absolute;left:624px;top:246px;width:0;height:430px;border-left:1px dashed #b8b8b8"></div>
<div style="position:absolute;left:774px;top:246px;width:0;height:430px;border-left:1px dashed #b8b8b8"></div>
<div style="position:absolute;left:924px;top:246px;width:0;height:430px;border-left:1px dashed #b8b8b8"></div>
<div style="position:absolute;left:1074px;top:246px;width:0;height:430px;border-left:1px dashed #b8b8b8"></div>
<div style="position:absolute;left:1224px;top:246px;width:0;height:430px;border-left:1px dashed #b8b8b8"></div>
<div style="position:absolute;left:1444px;top:246px;width:0;height:430px;border-left:1px dashed #b8b8b8"></div>
<svg style="position:absolute;left:612.9px;top:250px" width="7" height="6.5" viewBox="0 0 7 6.5"><path d="M0 0 H7 V6.5Z" fill="#1030c8"/></svg>
<span style="position:absolute;left:411.4px;top:252.36px;line-height:20px;font-size:11px;color:#2a5cd0;font-weight:normal;font-style:normal;white-space:pre;letter-spacing:0.089px;">1586952679981</span>
<span style="position:absolute;left:631.5px;top:252.36px;line-height:20px;font-size:11px;color:#333;font-weight:normal;font-style:normal;white-space:pre;letter-spacing:0.008px;">In Yard</span>
<span style="position:absolute;left:781.5px;top:252.36px;line-height:20px;font-size:11px;color:#333;font-weight:normal;font-style:normal;white-space:pre;letter-spacing:0.328px;">Empty</span>
<span style="position:absolute;left:1231.3px;top:252.36px;line-height:20px;font-size:11px;color:#2a5cd0;font-weight:normal;font-style:normal;white-space:pre;letter-spacing:0.187px;">M-59312-2</span>
<svg style="position:absolute;left:612.9px;top:280px" width="7" height="6.5" viewBox="0 0 7 6.5"><path d="M0 0 H7 V6.5Z" fill="#1030c8"/></svg>
<span style="position:absolute;left:411.4px;top:282.36px;line-height:20px;font-size:11px;color:#2a5cd0;font-weight:normal;font-style:normal;white-space:pre;letter-spacing:0.089px;">1587682426669</span>
<span style="position:absolute;left:631.5px;top:282.36px;line-height:20px;font-size:11px;color:#333;font-weight:normal;font-style:normal;white-space:pre;letter-spacing:0.008px;">In Yard</span>
<span style="position:absolute;left:781.5px;top:282.36px;line-height:20px;font-size:11px;color:#333;font-weight:normal;font-style:normal;white-space:pre;letter-spacing:0.328px;">Empty</span>
<span style="position:absolute;left:1231.3px;top:282.36px;line-height:20px;font-size:11px;color:#2a5cd0;font-weight:normal;font-style:normal;white-space:pre;letter-spacing:0.213px;">M-59348</span>
<svg style="position:absolute;left:612.9px;top:310px" width="7" height="6.5" viewBox="0 0 7 6.5"><path d="M0 0 H7 V6.5Z" fill="#1030c8"/></svg>
<span style="position:absolute;left:411.4px;top:312.36px;line-height:20px;font-size:11px;color:#2a5cd0;font-weight:normal;font-style:normal;white-space:pre;letter-spacing:0.157px;">1591102043460</span>
<span style="position:absolute;left:631.5px;top:312.36px;line-height:20px;font-size:11px;color:#333;font-weight:normal;font-style:normal;white-space:pre;letter-spacing:0.008px;">In Yard</span>
<span style="position:absolute;left:781.5px;top:312.36px;line-height:20px;font-size:11px;color:#333;font-weight:normal;font-style:normal;white-space:pre;letter-spacing:0.328px;">Empty</span>
<span style="position:absolute;left:1231.3px;top:312.36px;line-height:20px;font-size:11px;color:#2a5cd0;font-weight:normal;font-style:normal;white-space:pre;letter-spacing:0.348px;">M-67116</span>
<svg style="position:absolute;left:612.9px;top:340px" width="7" height="6.5" viewBox="0 0 7 6.5"><path d="M0 0 H7 V6.5Z" fill="#1030c8"/></svg>
<span style="position:absolute;left:411.4px;top:342.36px;line-height:20px;font-size:11px;color:#2a5cd0;font-weight:normal;font-style:normal;white-space:pre;letter-spacing:0.157px;">1591102203493</span>
<span style="position:absolute;left:631.5px;top:342.36px;line-height:20px;font-size:11px;color:#333;font-weight:normal;font-style:normal;white-space:pre;letter-spacing:0.008px;">In Yard</span>
<span style="position:absolute;left:781.5px;top:342.36px;line-height:20px;font-size:11px;color:#333;font-weight:normal;font-style:normal;white-space:pre;letter-spacing:0.328px;">Empty</span>
<span style="position:absolute;left:1231.3px;top:342.36px;line-height:20px;font-size:11px;color:#2a5cd0;font-weight:normal;font-style:normal;white-space:pre;letter-spacing:0.348px;">M-67118</span>
<svg style="position:absolute;left:612.9px;top:370px" width="7" height="6.5" viewBox="0 0 7 6.5"><path d="M0 0 H7 V6.5Z" fill="#1030c8"/></svg>
<span style="position:absolute;left:411.4px;top:372.36px;line-height:20px;font-size:11px;color:#2a5cd0;font-weight:normal;font-style:normal;white-space:pre;letter-spacing:0.157px;">1591160041056</span>
<span style="position:absolute;left:631.5px;top:372.36px;line-height:20px;font-size:11px;color:#333;font-weight:normal;font-style:normal;white-space:pre;letter-spacing:0.008px;">In Yard</span>
<span style="position:absolute;left:781.5px;top:372.36px;line-height:20px;font-size:11px;color:#333;font-weight:normal;font-style:normal;white-space:pre;letter-spacing:0.328px;">Empty</span>
<span style="position:absolute;left:1231.3px;top:372.36px;line-height:20px;font-size:11px;color:#2a5cd0;font-weight:normal;font-style:normal;white-space:pre;letter-spacing:0.213px;">M-67810</span>
<svg style="position:absolute;left:612.9px;top:400px" width="7" height="6.5" viewBox="0 0 7 6.5"><path d="M0 0 H7 V6.5Z" fill="#1030c8"/></svg>
<span style="position:absolute;left:411.4px;top:402.36px;line-height:20px;font-size:11px;color:#2a5cd0;font-weight:normal;font-style:normal;white-space:pre;letter-spacing:0.089px;">1591250059592</span>
<span style="position:absolute;left:631.5px;top:402.36px;line-height:20px;font-size:11px;color:#333;font-weight:normal;font-style:normal;white-space:pre;letter-spacing:0.008px;">In Yard</span>
<span style="position:absolute;left:781.5px;top:402.36px;line-height:20px;font-size:11px;color:#333;font-weight:normal;font-style:normal;white-space:pre;letter-spacing:0.328px;">Empty</span>
<span style="position:absolute;left:1231.3px;top:402.36px;line-height:20px;font-size:11px;color:#2a5cd0;font-weight:normal;font-style:normal;white-space:pre;letter-spacing:0.213px;">M-68248</span>
<svg style="position:absolute;left:612.9px;top:430px" width="7" height="6.5" viewBox="0 0 7 6.5"><path d="M0 0 H7 V6.5Z" fill="#1030c8"/></svg>
<span style="position:absolute;left:411.4px;top:432.36px;line-height:20px;font-size:11px;color:#2a5cd0;font-weight:normal;font-style:normal;white-space:pre;letter-spacing:0.089px;">1591254466137</span>
<span style="position:absolute;left:631.5px;top:432.36px;line-height:20px;font-size:11px;color:#333;font-weight:normal;font-style:normal;white-space:pre;letter-spacing:0.008px;">In Yard</span>
<span style="position:absolute;left:781.5px;top:432.36px;line-height:20px;font-size:11px;color:#333;font-weight:normal;font-style:normal;white-space:pre;letter-spacing:0.328px;">Empty</span>
<span style="position:absolute;left:1231.3px;top:432.36px;line-height:20px;font-size:11px;color:#2a5cd0;font-weight:normal;font-style:normal;white-space:pre;letter-spacing:0.213px;">M-68250</span>
<svg style="position:absolute;left:612.9px;top:460px" width="7" height="6.5" viewBox="0 0 7 6.5"><path d="M0 0 H7 V6.5Z" fill="#1030c8"/></svg>
<span style="position:absolute;left:411.4px;top:462.36px;line-height:20px;font-size:11px;color:#2a5cd0;font-weight:normal;font-style:normal;white-space:pre;letter-spacing:0.089px;">1592224964360</span>
<span style="position:absolute;left:631.5px;top:462.36px;line-height:20px;font-size:11px;color:#333;font-weight:normal;font-style:normal;white-space:pre;letter-spacing:0.008px;">In Yard</span>
<span style="position:absolute;left:781.5px;top:462.36px;line-height:20px;font-size:11px;color:#333;font-weight:normal;font-style:normal;white-space:pre;letter-spacing:0.328px;">Empty</span>
<span style="position:absolute;left:1231.3px;top:462.36px;line-height:20px;font-size:11px;color:#2a5cd0;font-weight:normal;font-style:normal;white-space:pre;letter-spacing:0.213px;">M-73765</span>
<svg style="position:absolute;left:612.9px;top:490px" width="7" height="6.5" viewBox="0 0 7 6.5"><path d="M0 0 H7 V6.5Z" fill="#1030c8"/></svg>
<span style="position:absolute;left:411.4px;top:492.36px;line-height:20px;font-size:11px;color:#2a5cd0;font-weight:normal;font-style:normal;white-space:pre;letter-spacing:0.089px;">1594618164844</span>
<span style="position:absolute;left:631.5px;top:492.36px;line-height:20px;font-size:11px;color:#333;font-weight:normal;font-style:normal;white-space:pre;letter-spacing:0.008px;">In Yard</span>
<span style="position:absolute;left:781.5px;top:492.36px;line-height:20px;font-size:11px;color:#333;font-weight:normal;font-style:normal;white-space:pre;letter-spacing:0.328px;">Empty</span>
<span style="position:absolute;left:1231.3px;top:492.36px;line-height:20px;font-size:11px;color:#2a5cd0;font-weight:normal;font-style:normal;white-space:pre;letter-spacing:0.213px;">M-94993</span>
<svg style="position:absolute;left:612.9px;top:520px" width="7" height="6.5" viewBox="0 0 7 6.5"><path d="M0 0 H7 V6.5Z" fill="#1030c8"/></svg>
<span style="position:absolute;left:411.4px;top:522.36px;line-height:20px;font-size:11px;color:#2a5cd0;font-weight:normal;font-style:normal;white-space:pre;letter-spacing:0.089px;">1595939633393</span>
<span style="position:absolute;left:631.5px;top:522.36px;line-height:20px;font-size:11px;color:#333;font-weight:normal;font-style:normal;white-space:pre;letter-spacing:0.181px;">Out Of Yard</span>
<span style="position:absolute;left:781.5px;top:522.36px;line-height:20px;font-size:11px;color:#333;font-weight:normal;font-style:normal;white-space:pre;letter-spacing:0.328px;">Empty</span>
<span style="position:absolute;left:1231.3px;top:522.36px;line-height:20px;font-size:11px;color:#2a5cd0;font-weight:normal;font-style:normal;white-space:pre;letter-spacing:0.165px;">M-108018</span>
<svg style="position:absolute;left:612.9px;top:550px" width="7" height="6.5" viewBox="0 0 7 6.5"><path d="M0 0 H7 V6.5Z" fill="#1030c8"/></svg>
<span style="position:absolute;left:411.4px;top:552.36px;line-height:20px;font-size:11px;color:#2a5cd0;font-weight:normal;font-style:normal;white-space:pre;letter-spacing:0.089px;">1596213337902</span>
<span style="position:absolute;left:631.5px;top:552.36px;line-height:20px;font-size:11px;color:#333;font-weight:normal;font-style:normal;white-space:pre;letter-spacing:0.008px;">In Yard</span>
<span style="position:absolute;left:781.5px;top:552.36px;line-height:20px;font-size:11px;color:#333;font-weight:normal;font-style:normal;white-space:pre;letter-spacing:0.328px;">Empty</span>
<span style="position:absolute;left:1231.3px;top:552.36px;line-height:20px;font-size:11px;color:#2a5cd0;font-weight:normal;font-style:normal;white-space:pre;letter-spacing:-0.227px;">M-RTTPE-Ship-2</span>
<svg style="position:absolute;left:612.9px;top:580px" width="7" height="6.5" viewBox="0 0 7 6.5"><path d="M0 0 H7 V6.5Z" fill="#1030c8"/></svg>
<span style="position:absolute;left:411.4px;top:582.36px;line-height:20px;font-size:11px;color:#2a5cd0;font-weight:normal;font-style:normal;white-space:pre;letter-spacing:0.089px;">1596526803415</span>
<span style="position:absolute;left:631.5px;top:582.36px;line-height:20px;font-size:11px;color:#333;font-weight:normal;font-style:normal;white-space:pre;letter-spacing:0.008px;">In Yard</span>
<span style="position:absolute;left:781.5px;top:582.36px;line-height:20px;font-size:11px;color:#333;font-weight:normal;font-style:normal;white-space:pre;letter-spacing:0.328px;">Empty</span>
<span style="position:absolute;left:1231.3px;top:582.36px;line-height:20px;font-size:11px;color:#2a5cd0;font-weight:normal;font-style:normal;white-space:pre;letter-spacing:0.283px;">M-112021</span>
<svg style="position:absolute;left:612.9px;top:610px" width="7" height="6.5" viewBox="0 0 7 6.5"><path d="M0 0 H7 V6.5Z" fill="#1030c8"/></svg>
<span style="position:absolute;left:411.4px;top:612.36px;line-height:20px;font-size:11px;color:#2a5cd0;font-weight:normal;font-style:normal;white-space:pre;letter-spacing:0.089px;">1596528131420</span>
<span style="position:absolute;left:631.5px;top:612.36px;line-height:20px;font-size:11px;color:#333;font-weight:normal;font-style:normal;white-space:pre;letter-spacing:0.008px;">In Yard</span>
<span style="position:absolute;left:781.5px;top:612.36px;line-height:20px;font-size:11px;color:#333;font-weight:normal;font-style:normal;white-space:pre;letter-spacing:0.328px;">Empty</span>
<span style="position:absolute;left:1231.3px;top:612.36px;line-height:20px;font-size:11px;color:#2a5cd0;font-weight:normal;font-style:normal;white-space:pre;letter-spacing:0.267px;">M-112021A</span>
<svg style="position:absolute;left:612.9px;top:640px" width="7" height="6.5" viewBox="0 0 7 6.5"><path d="M0 0 H7 V6.5Z" fill="#1030c8"/></svg>
<span style="position:absolute;left:411.4px;top:642.36px;line-height:20px;font-size:11px;color:#2a5cd0;font-weight:normal;font-style:normal;white-space:pre;letter-spacing:0.089px;">1597137099064</span>
<span style="position:absolute;left:631.5px;top:642.36px;line-height:20px;font-size:11px;color:#333;font-weight:normal;font-style:normal;white-space:pre;letter-spacing:0.181px;">Out Of Yard</span>
<span style="position:absolute;left:781.5px;top:642.36px;line-height:20px;font-size:11px;color:#333;font-weight:normal;font-style:normal;white-space:pre;letter-spacing:0.328px;">Empty</span>
<span style="position:absolute;left:1231.3px;top:642.36px;line-height:20px;font-size:11px;color:#2a5cd0;font-weight:normal;font-style:normal;white-space:pre;letter-spacing:0.213px;">M-92602</span>
<svg style="position:absolute;left:612.9px;top:670px" width="7" height="6.5" viewBox="0 0 7 6.5"><path d="M0 0 H7 V6.5Z" fill="#1030c8"/></svg>
</div></div>
<div style="position:absolute;left:402.7px;top:245px;width:1.6px;height:444px;background:#2a2a2a;"></div>
<div style="position:absolute;left:403.3px;top:192px;width:1px;height:53px;background:#2a2a2a;"></div>
<div style="position:absolute;left:404.3px;top:193px;width:0.9px;height:52px;background:#fff;"></div>
<div style="position:absolute;left:1558px;top:246px;width:17px;height:426px;background:#f1f1f1;"></div>
<div style="position:absolute;left:1560px;top:263px;width:13px;height:371px;background:#c1c1c1;"></div>
<svg style="position:absolute;left:1562.5px;top:252.5px" width="8" height="5" viewBox="0 0 8 5"><path d="M0 4.5 L4 0.5 L8 4.5Z" fill="#a3a3a3"/></svg>
<svg style="position:absolute;left:1562.5px;top:660px" width="8" height="5" viewBox="0 0 8 5"><path d="M0 0.5 L4 4.5 L8 0.5Z" fill="#505050"/></svg>
<div style="position:absolute;left:405px;top:672px;width:1153px;height:17px;background:#f1f1f1;"></div>
<div style="position:absolute;left:421.5px;top:674px;width:454px;height:13px;background:#c1c1c1;"></div>
<svg style="position:absolute;left:411px;top:676.5px" width="5" height="8" viewBox="0 0 5 8"><path d="M4.5 0 L0.5 4 L4.5 8Z" fill="#a3a3a3"/></svg>
<svg style="position:absolute;left:1547.5px;top:676.5px" width="5" height="8" viewBox="0 0 5 8"><path d="M0.5 0 L4.5 4 L0.5 8Z" fill="#505050"/></svg>
<div style="position:absolute;left:1558px;top:672px;width:17px;height:17px;background:#dcdcdc;"></div>
<span style="position:absolute;left:381.8px;top:709.36px;line-height:20px;font-size:11px;color:#333;font-weight:normal;font-style:normal;white-space:pre;letter-spacing:0.146px;">Viewing 1-15 of 15</span>
<div style="position:absolute;left:1287px;top:706px;width:90px;height:30px;background:#00586b;border:1px solid #2f8298;border-radius:2px;box-sizing:border-box;"></div>
<span style="position:absolute;left:1294.5px;top:711.87px;line-height:20px;font-size:12.5px;color:#fff;font-weight:normal;font-style:normal;white-space:pre;letter-spacing:-0.309px;">Export to CSV</span>
<div style="position:absolute;left:1381px;top:706px;width:129px;height:30px;background:#00586b;border:1px solid #2f8298;border-radius:2px;box-sizing:border-box;"></div>
<span style="position:absolute;left:1388.3px;top:711.87px;line-height:20px;font-size:12.5px;color:#fff;font-weight:normal;font-style:normal;white-space:pre;letter-spacing:-0.137px;">Check-In New Trailer</span>
<div style="position:absolute;left:1514px;top:706px;width:72px;height:30px;background:#357787;border:1px solid #5a9fb0;border-radius:2px;box-sizing:border-box;"></div>
<span style="position:absolute;left:1521px;top:711.87px;line-height:20px;font-size:12.5px;color:#fff;font-weight:normal;font-style:normal;white-space:pre;letter-spacing:-0.050px;">Actions</span>
<svg style="position:absolute;left:1570.2px;top:719.5px" width="7.4" height="4" viewBox="0 0 7.4 4"><path d="M0 0 H7.4 L3.7 4Z" fill="#fff"/></svg>
</body></html>
